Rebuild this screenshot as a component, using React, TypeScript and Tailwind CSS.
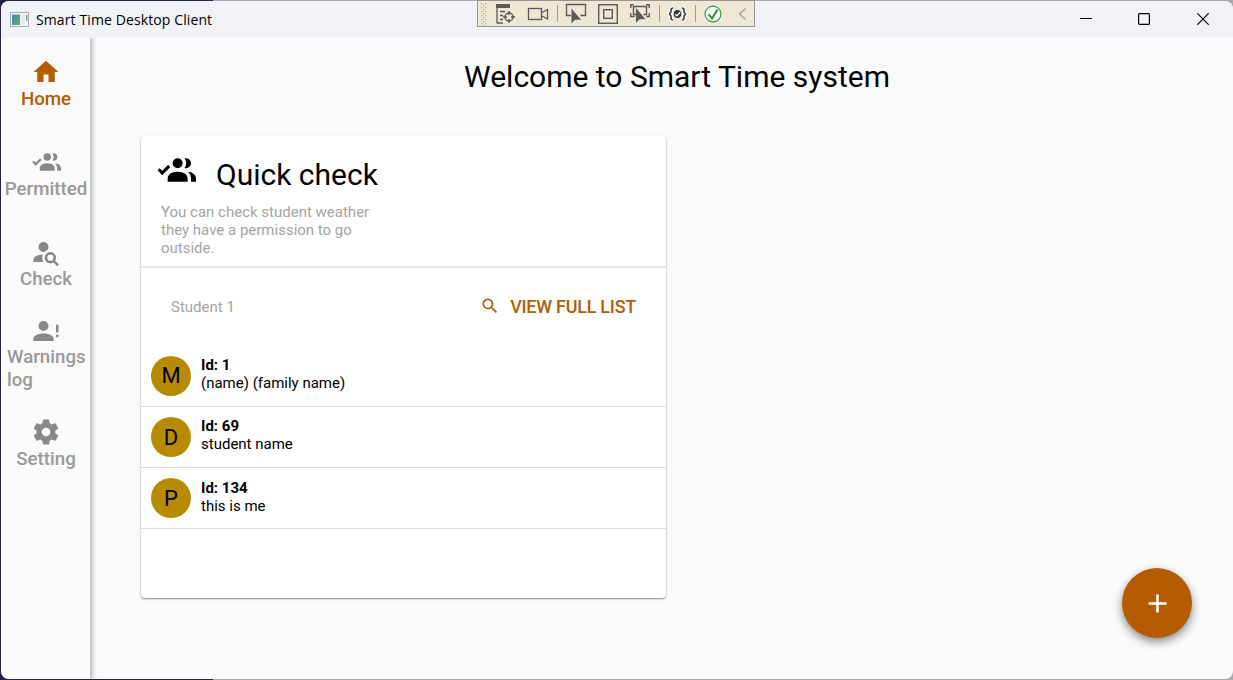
import React from "react";

const PATHS = {
  home: "M10,20V14H14V20H19V12H22L12,3L2,12H5V20H10Z",
  group:
    "M19,17V19H7V17S7,13 13,13 19,17 19,17M16,8A3,3 0 1,0 13,11A3,3 0 0,0 16,8M19.2,13.06A5.6,5.6 0 0,1 21,17V19H24V17S24,13.55 19.2,13.06M18,5A2.91,2.91 0 0,0 17.11,5.14A5,5 0 0,1 17.11,10.86A2.91,2.91 0 0,0 18,11A3,3 0 0,0 18,5M7.34,8.92L8.5,10.33L3.75,15.08L1,12.08L2.16,10.92L3.75,12.5L7.34,8.92",
  accountSearch:
    "M15.5,12C18,12 20,14 20,16.5C20,17.38 19.75,18.21 19.31,18.9L22.39,22L21,23.39L17.88,20.32C17.19,20.75 16.37,21 15.5,21C13,21 11,19 11,16.5C11,14 13,12 15.5,12M15.5,14A2.5,2.5 0 0,0 13,16.5A2.5,2.5 0 0,0 15.5,19A2.5,2.5 0 0,0 18,16.5A2.5,2.5 0 0,0 15.5,14M10,4A4,4 0 0,1 14,8C14,8.91 13.69,9.75 13.18,10.43C12.32,10.75 11.55,11.26 10.91,11.9L10,12A4,4 0 0,1 6,8A4,4 0 0,1 10,4M2,20V18C2,15.88 5.31,14.14 9.5,14C9.18,14.78 9,15.62 9,16.5C9,17.79 9.38,19 10,20H2Z",
  accountAlert:
    "M10 4A4 4 0 0 0 6 8A4 4 0 0 0 10 12A4 4 0 0 0 14 8A4 4 0 0 0 10 4M10 14C5.58 14 2 15.79 2 18V20H18V18C18 15.79 14.42 14 10 14M20 12V7H22V13H20M20 17V15H22V17Z",
  cog: "M12,15.5A3.5,3.5 0 0,1 8.5,12A3.5,3.5 0 0,1 12,8.5A3.5,3.5 0 0,1 15.5,12A3.5,3.5 0 0,1 12,15.5M19.43,12.97C19.47,12.65 19.5,12.33 19.5,12C19.5,11.67 19.47,11.34 19.43,11L21.54,9.37C21.73,9.22 21.78,8.95 21.66,8.73L19.66,5.27C19.54,5.05 19.27,4.96 19.05,5.05L16.56,6.05C16.04,5.66 15.5,5.32 14.87,5.07L14.5,2.42C14.46,2.18 14.25,2 14,2H10C9.75,2 9.54,2.18 9.5,2.42L9.13,5.07C8.5,5.32 7.96,5.66 7.44,6.05L4.95,5.05C4.73,4.96 4.46,5.05 4.34,5.27L2.34,8.73C2.21,8.95 2.27,9.22 2.46,9.37L4.57,11C4.53,11.34 4.5,11.67 4.5,12C4.5,12.33 4.53,12.65 4.57,12.97L2.46,14.63C2.27,14.78 2.21,15.05 2.34,15.27L4.34,18.73C4.46,18.95 4.73,19.03 4.95,18.95L7.44,17.94C7.96,18.34 8.5,18.68 9.13,18.93L9.5,21.58C9.54,21.82 9.75,22 10,22H14C14.25,22 14.46,21.82 14.5,21.58L14.87,18.93C15.5,18.67 16.04,18.34 16.56,17.94L19.05,18.95C19.27,19.03 19.54,18.95 19.66,18.73L21.66,15.27C21.78,15.05 21.73,14.78 21.54,14.63L19.43,12.97Z",
  magnify:
    "M9.5,3A6.5,6.5 0 0,1 16,9.5C16,11.11 15.41,12.59 14.44,13.73L14.71,14H15.5L20.5,19L19,20.5L14,15.5V14.71L13.73,14.44C12.59,15.41 11.11,16 9.5,16A6.5,6.5 0 0,1 3,9.5A6.5,6.5 0 0,1 9.5,3M9.5,5C7,5 5,7 5,9.5C5,12 7,14 9.5,14C12,14 14,12 14,9.5C14,7 12,5 9.5,5Z",
  plus: "M19,13H13V19H11V13H5V11H11V5H13V11H19V13Z",
};

function Icon({ name, className }: { name: keyof typeof PATHS; className: string }) {
  return (
    <svg viewBox="0 0 24 24" fill="currentColor" className={className}>
      <path d={PATHS[name]} />
    </svg>
  );
}

const NAV: { icon: keyof typeof PATHS; label: string; active?: boolean; wrap?: boolean }[] = [
  { icon: "home", label: "Home", active: true },
  { icon: "group", label: "Permitted" },
  { icon: "accountSearch", label: "Check" },
  { icon: "accountAlert", label: "Warnings log", wrap: true },
  { icon: "cog", label: "Setting" },
];

const STUDENTS = [
  { initial: "M", id: "1", name: "(name) (family name)" },
  { initial: "D", id: "69", name: "student name" },
  { initial: "P", id: "134", name: "this is me" },
];

function DebugToolbar() {
  return (
    <div className="absolute left-[477px] top-0 z-30 h-[27px] w-[278px] border border-[#979593] bg-[#efe7d3]">
      <svg viewBox="478 1 276 25" className="block h-[25px] w-[276px]" fill="none" stroke="#5a5a5a">
        <g fill="#aaa69b" stroke="none">
          {[3, 7, 11, 15, 19, 23].map((y) => (
            <React.Fragment key={y}>
              <rect x="481" y={y} width="1.2" height="1.2" />
              <rect x="485" y={y} width="1.2" height="1.2" />
              <rect x="483" y={y + 2} width="1.2" height="1.2" />
            </React.Fragment>
          ))}
        </g>
        <path d="M496 4h14v4h-14z" fill="#5a5a5a" stroke="none" />
        <path d="M497 8v15.5M497 23h6M500 11.5h5M500 15.5h3M500 19.5h3" strokeWidth="1.3" />
        <circle cx="509" cy="17" r="4" strokeWidth="1.4" />
        <path d="M509 11v4M509 19v4M503 17h4M511 17h4" strokeWidth="1.4" />
        <rect x="528.5" y="8.5" width="13" height="11" strokeWidth="1.3" />
        <path d="M542 12.5l5.5-3v9.5l-5.500-3" strokeWidth="1.3" />
        <path d="M557.500 5v17M659.500 5v17M695.500 5v17" stroke="#a09d94" />
        <path d="M571 15.500h-4.500v-11h19v11h-5" strokeWidth="1.4" />
        <path d="M571.500 8.500v15l3.500-3.700h6z" fill="#5a5a5a" stroke="none" />
        <rect x="598.700" y="4.700" width="18.600" height="18.600" strokeWidth="1.400" />
        <rect x="603.700" y="9.700" width="8.600" height="8.600" strokeWidth="1.400" />
        <path d="M636 14.500h-2.500v-8h13v8h-3M630.700 8v-3.300h3M646 4.700h3.300v3.300M630.700 13v3.500h4M649.300 13v3.500h-3" strokeWidth="1.400" />
        <path d="M636 8v15l3.500-3.700h6z" fill="#5a5a5a" stroke="none" />
        <path d="M673 8q-2 0-2 2v2l-1.500 2 1.500 2v2q0 2 2 2M682 8q2 0 2 2v2l1.500 2-1.500 2v2q0 2-2 2" stroke="#fff" strokeWidth="4" />
        <path d="M673 8q-2 0-2 2v2l-1.500 2 1.500 2v2q0 2 2 2M682 8q2 0 2 2v2l1.500 2-1.500 2v2q0 2-2 2" stroke="#333" strokeWidth="1.500" />
        <circle cx="677.500" cy="14" r="4.500" fill="#333" stroke="#fff" />
        <path d="M675.300 14.200l1.700 1.700 3.200-3.700" stroke="#fff" strokeWidth="1.300" />
        <circle cx="713" cy="14" r="8.200" fill="#f7f9f3" stroke="#fff" strokeWidth="2.500" />
        <circle cx="713" cy="14" r="8" stroke="#349a36" strokeWidth="1.300" />
        <path d="M708.500 14.300l3.600 4 5.400-8.700" stroke="#2b962d" strokeWidth="2" />
        <path d="M745.500 8.500l-6 5.500 6 5.500" stroke="#aaa69d" strokeWidth="1.400" />
      </svg>
    </div>
  );
}

function TitleBar() {
  return (
    <header className="relative z-20 flex h-[37px] shrink-0 items-center justify-between bg-[#f1f2f8] pl-[9px] pr-[24px]">
      <div className="flex items-center gap-[7px]">
        <svg viewBox="0 0 19 15" className="-mt-px h-[15px] w-[19px]">
          <defs>
            <linearGradient id="pane" x1="0" y1="0" x2="0.600" y2="1">
              <stop offset="0" stopColor="#4f7fae" />
              <stop offset="1" stopColor="#58ad78" />
            </linearGradient>
          </defs>
          <rect x="0.500" y="0.500" width="18" height="14" fill="#f4f6f7" stroke="#a9adb5" />
          <rect x="2" y="2.500" width="8" height="10.500" fill="url(#pane)" />
          <rect x="11" y="2.500" width="4" height="10.500" fill="#e6eaeb" />
          <rect x="16" y="3" width="1.500" height="6" fill="#6fae9f" />
        </svg>
        <span className="whitespace-nowrap font-['Open_Sans',sans-serif] text-[14px] leading-5 tracking-[0.110px] text-black">
          Smart Time Desktop Client
        </span>
      </div>
      <div className="-mt-px flex items-center">
        <svg viewBox="0 0 12 12" className="mr-[46px] size-3" stroke="#000" fill="none">
          <path d="M0 5.500h12" />
        </svg>
        <svg viewBox="0 0 12 12" className="mr-[47px] size-3" stroke="#000" strokeWidth="1.200" fill="none">
          <rect x="0.600" y="0.600" width="10.800" height="10.800" rx="1" />
        </svg>
        <svg viewBox="0 0 12 12" className="size-3" stroke="#000" strokeWidth="1.200" fill="none">
          <path d="M0.300 0.300l11.400 11.400M11.700 0.300L0.300 11.700" />
        </svg>
      </div>
    </header>
  );
}

function Sidebar() {
  return (
    <nav className="z-10 flex w-[89px] shrink-0 flex-col bg-[#fafafa] pl-px shadow-[1px_0_5px_1px_rgba(0,0,0,0.300)]">
      {NAV.map((item) => (
        <button
          key={item.label}
          className={`flex h-[90px] flex-col items-center justify-center pt-px text-left text-[18.700px] font-medium leading-[23px] ${
            item.active ? "text-[#b55b00]" : "text-[#999]"
          }`}
        >
          <Icon name={item.icon} className={`size-[30px] ${item.active ? "" : "text-[#888]"}`} />
          <span className={item.wrap ? "w-[78px]" : "-mb-px whitespace-nowrap pt-px"}>{item.label}</span>
        </button>
      ))}
    </nav>
  );
}

function QuickCheckCard() {
  return (
    <section className="mt-[39px] ml-[51px] flex h-[462px] w-[525px] flex-col rounded-[4px] bg-white shadow-[0_1px_2px_rgba(0,0,0,0.450)]">
      <div className="h-[132px] shrink-0 border-b-2 border-[#e4e4e4] pl-[15px] pt-[14px]">
        <div className="flex items-start gap-5">
          <Icon name="group" className="size-10" />
          <h2 className="mt-[5px] text-[30px] leading-10">Quick check</h2>
        </div>
        <p className="ml-[5px] mt-[8px] w-[220px] text-[15px] leading-[18px] text-[#a4a4a4]">
          You can check student weather they have a permission to go outside.
        </p>
      </div>
      <div className="flex h-[77.600px] shrink-0 items-center justify-between pl-[30px] pr-[30px]">
        <span className="pt-px text-[15px] text-[#a4a4a4]">Student 1</span>
        <button className="flex items-center gap-[10px] text-[18px] font-medium tracking-[-0.260px] text-[#b55b00]">
          <Icon name="magnify" className="-mt-px size-5" />
          VIEW FULL LIST
        </button>
      </div>
      <ul>
        {STUDENTS.map((s) => (
          <li key={s.id} className="flex h-[61.300px] items-center gap-[10px] border-b border-[#dcdcdc] pl-[10px]">
            <div className="flex size-10 items-center justify-center rounded-full bg-[#b88a00] text-[22px]">{s.initial}</div>
            <div className="-mt-[3.200px] text-[15px] leading-[18px]">
              <div className="font-bold">Id: {s.id}</div>
              <div>{s.name}</div>
            </div>
          </li>
        ))}
      </ul>
    </section>
  );
}

export default function App() {
  return (
    <div className="relative h-[680px] w-[1233px] overflow-hidden bg-[linear-gradient(90deg,#24234a_213px,#aaaaae_213px)] pb-px pl-px pt-px font-['Roboto',sans-serif] text-black">
      <div className="flex h-[678px] flex-col overflow-hidden rounded-[8px] bg-[#fafafa]">
        <TitleBar />
        <div className="flex min-h-0 flex-1">
          <Sidebar />
          <main className="flex-1">
            <h1 className="ml-[31px] pt-[19px] text-center text-[30px] leading-10">Welcome to Smart Time system</h1>
            <QuickCheckCard />
          </main>
        </div>
      </div>
      <DebugToolbar />
      <button className="absolute left-[1122px] top-[568px] flex size-[70px] items-center justify-center rounded-full bg-[#b55b00] pl-[1.500px] pt-[1.500px] text-white shadow-[0_4px_10px_rgba(0,0,0,0.450)]">
        <Icon name="plus" className="size-[31px]" />
      </button>
    </div>
  );
}
